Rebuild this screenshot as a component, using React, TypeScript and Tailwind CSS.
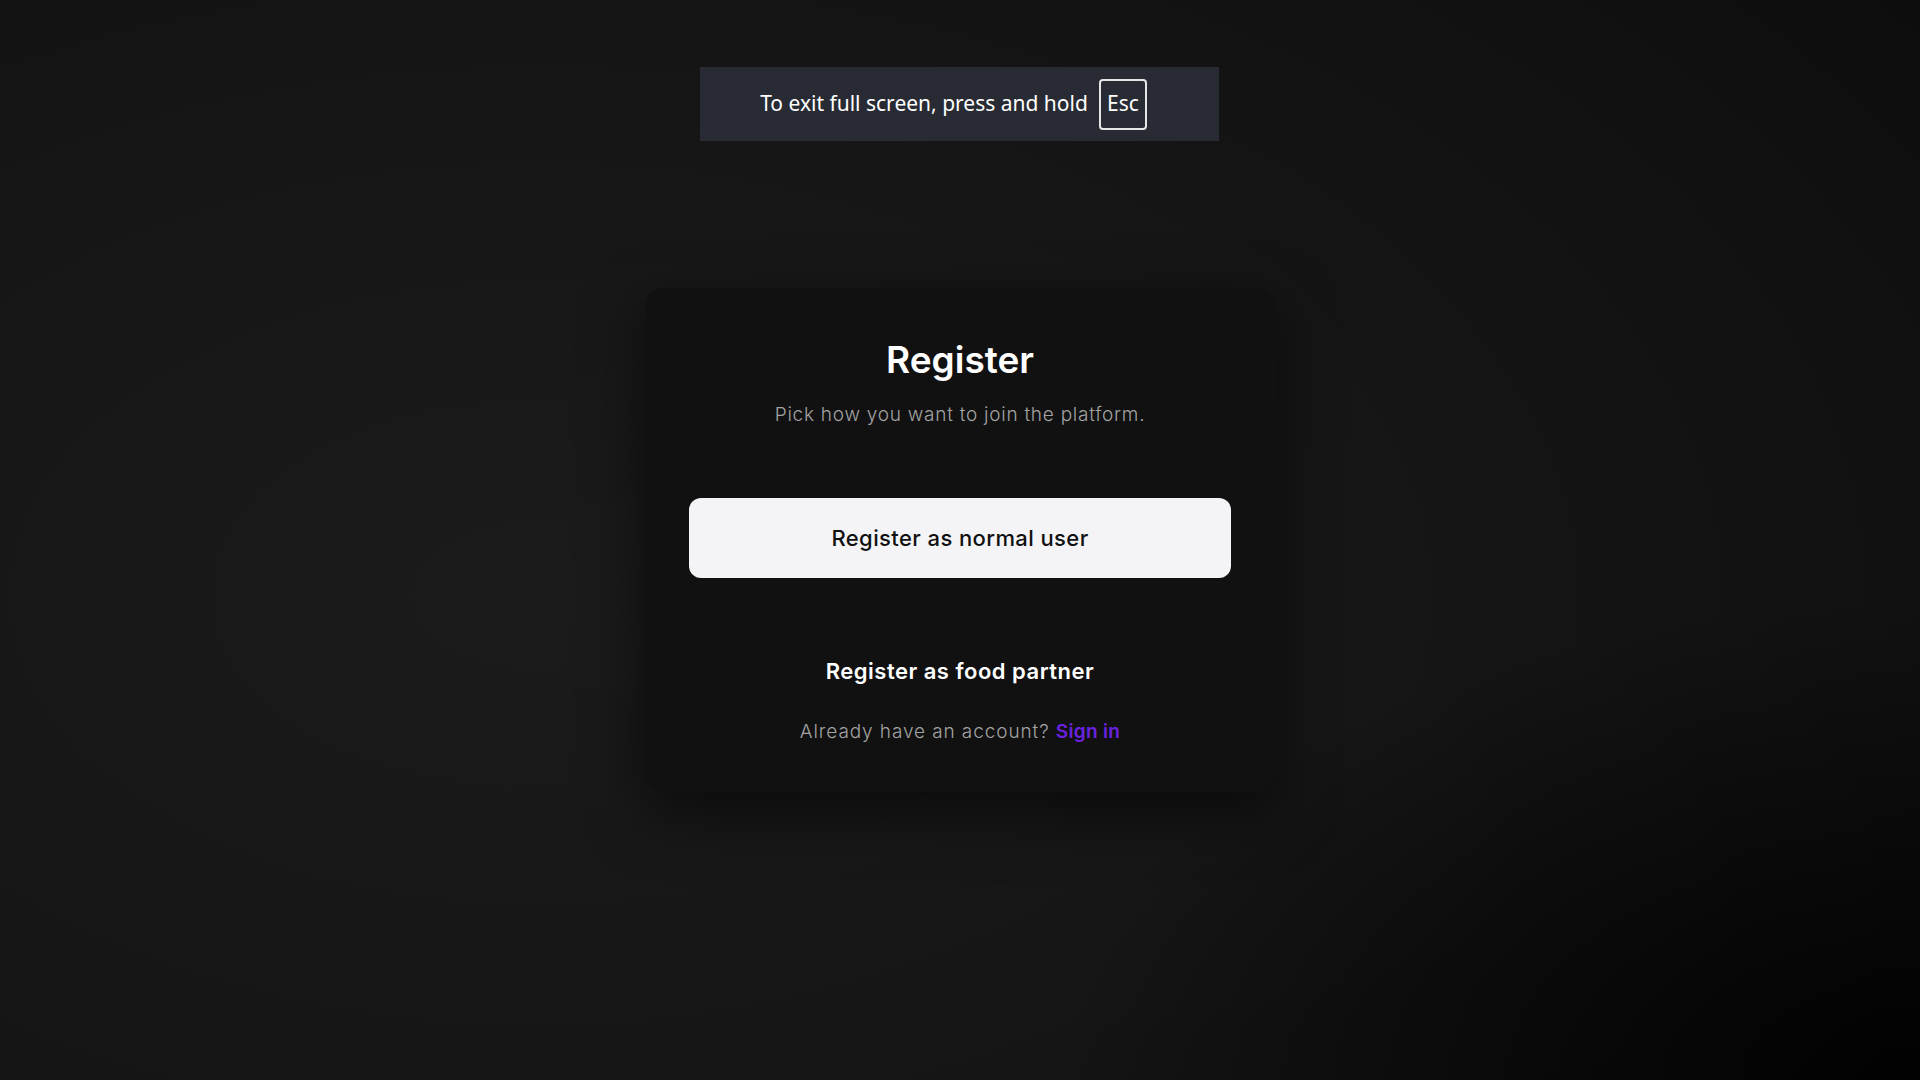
import React from "react";

const RegisterChoice: React.FC = () => {
  return (
    <div
      className="relative min-h-screen w-full flex items-center justify-center bg-[#0d0d0d] bg-[radial-gradient(ellipse_45%_45%_at_100%_100%,rgba(0,0,0,0.9)_0%,rgba(0,0,0,0)_100%),radial-gradient(ellipse_100%_105%_at_28%_55%,#1b1b1b_0%,#161616_42%,#111111_72%,#0b0b0b_100%)]"
      style={{ fontFamily: "Inter, 'Noto Sans', sans-serif" }}
    >
      {/* Browser fullscreen hint */}
      <div
        className="absolute top-[67px] left-[700px] w-[519px] h-[74px] bg-[#282b33] flex items-center justify-center gap-[11px] pr-[12px] text-white text-[21px]"
        style={{ fontFamily: "'Noto Sans', 'Open Sans', sans-serif" }}
      >
        <span>To exit full screen, press and hold</span>
        <span className="w-[48px] h-[51px] border-2 border-[#e6e6e6] rounded-[4px] flex items-center justify-center">
          Esc
        </span>
      </div>

      {/* Card */}
      <div className="w-[630px] bg-[#111111] rounded-[20px] shadow-[0_20px_60px_rgba(0,0,0,0.55)] px-[44px] pt-[50px] pb-[46px] flex flex-col items-center text-center">
        <h1 className="text-[37px] leading-[44px] font-semibold text-white">
          Register
        </h1>
        <p className="mt-[19px] text-[19px] leading-[28px] font-light tracking-[0.75px] text-[#a3a3a3]">
          Pick how you want to join the platform.
        </p>

        <button className="mt-[69px] w-full h-[80px] rounded-[12px] bg-[#f4f4f6] text-[#111111] text-[22px] tracking-[0.4px] font-medium">
          Register as normal user
        </button>

        <button className="mt-[79px] text-[22px] leading-[28px] tracking-[0.5px] font-semibold text-white">
          Register as food partner
        </button>

        <p className="mt-[33px] text-[19px] leading-[28px] font-light tracking-[0.9px] text-[#a3a3a3]">
          Already have an account?{" "}
          <a href="#" className="text-[#6a22e0] font-semibold tracking-[0.3px]">
            Sign in
          </a>
        </p>
      </div>
    </div>
  );
};

export default function App() {
  return <RegisterChoice />;
}
